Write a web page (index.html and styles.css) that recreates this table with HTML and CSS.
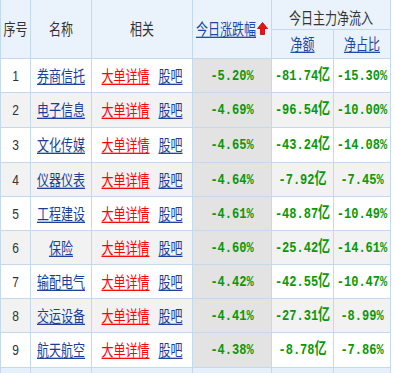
FILE: index.html
```html
<!DOCTYPE html>
<html lang="zh-CN">
<head>
<meta charset="utf-8">
<title>板块资金流</title>
<link rel="stylesheet" href="styles.css">
</head>
<body>
<div class="board">
  <div class="hd span2"><span class="t">序号</span></div>
  <div class="hd span2"><span class="t">名称</span></div>
  <div class="hd span2"><span class="t">相关</span></div>
  <div class="hd span2 sortcol"><a class="t lk" href="#">今日涨跌幅</a><svg class="arrow" width="11" height="13" viewBox="0 0 11 13"><polygon points="5.5,0.5 10.5,6.5 7.5,6.5 7.5,12.5 3.5,12.5 3.5,6.5 0.5,6.5" fill="#ee1111" stroke="#b80000" stroke-width="0.8"/></svg></div>
  <div class="hd cspan2 top"><span class="t">今日主力净流入</span></div>
  <div class="hd"><a class="t lk" href="#">净额</a></div>
  <div class="hd"><a class="t lk" href="#">净占比</a></div>

  <div class="row odd">
    <div class="c"><span class="t idx">1</span></div>
    <div class="c"><a class="t nm" href="#">券商信托</a></div>
    <div class="c rel"><a class="t red" href="#">大单详情</a><a class="t nm" href="#">股吧</a></div>
    <div class="c s"><span class="t num">-5.20%</span></div>
    <div class="c"><span class="t num">-81.74亿</span></div>
    <div class="c"><span class="t num">-15.30%</span></div>
  </div>
  <div class="row even">
    <div class="c"><span class="t idx">2</span></div>
    <div class="c"><a class="t nm" href="#">电子信息</a></div>
    <div class="c rel"><a class="t red" href="#">大单详情</a><a class="t nm" href="#">股吧</a></div>
    <div class="c s"><span class="t num">-4.69%</span></div>
    <div class="c"><span class="t num">-96.54亿</span></div>
    <div class="c"><span class="t num">-10.00%</span></div>
  </div>
  <div class="row odd">
    <div class="c"><span class="t idx">3</span></div>
    <div class="c"><a class="t nm" href="#">文化传媒</a></div>
    <div class="c rel"><a class="t red" href="#">大单详情</a><a class="t nm" href="#">股吧</a></div>
    <div class="c s"><span class="t num">-4.65%</span></div>
    <div class="c"><span class="t num">-43.24亿</span></div>
    <div class="c"><span class="t num">-14.08%</span></div>
  </div>
  <div class="row even">
    <div class="c"><span class="t idx">4</span></div>
    <div class="c"><a class="t nm" href="#">仪器仪表</a></div>
    <div class="c rel"><a class="t red" href="#">大单详情</a><a class="t nm" href="#">股吧</a></div>
    <div class="c s"><span class="t num">-4.64%</span></div>
    <div class="c"><span class="t num">-7.92亿</span></div>
    <div class="c"><span class="t num">-7.45%</span></div>
  </div>
  <div class="row odd">
    <div class="c"><span class="t idx">5</span></div>
    <div class="c"><a class="t nm" href="#">工程建设</a></div>
    <div class="c rel"><a class="t red" href="#">大单详情</a><a class="t nm" href="#">股吧</a></div>
    <div class="c s"><span class="t num">-4.61%</span></div>
    <div class="c"><span class="t num">-48.87亿</span></div>
    <div class="c"><span class="t num">-10.49%</span></div>
  </div>
  <div class="row even">
    <div class="c"><span class="t idx">6</span></div>
    <div class="c"><a class="t nm" href="#">保险</a></div>
    <div class="c rel"><a class="t red" href="#">大单详情</a><a class="t nm" href="#">股吧</a></div>
    <div class="c s"><span class="t num">-4.60%</span></div>
    <div class="c"><span class="t num">-25.42亿</span></div>
    <div class="c"><span class="t num">-14.61%</span></div>
  </div>
  <div class="row odd">
    <div class="c"><span class="t idx">7</span></div>
    <div class="c"><a class="t nm" href="#">输配电气</a></div>
    <div class="c rel"><a class="t red" href="#">大单详情</a><a class="t nm" href="#">股吧</a></div>
    <div class="c s"><span class="t num">-4.42%</span></div>
    <div class="c"><span class="t num">-42.55亿</span></div>
    <div class="c"><span class="t num">-10.47%</span></div>
  </div>
  <div class="row even">
    <div class="c"><span class="t idx">8</span></div>
    <div class="c"><a class="t nm" href="#">交运设备</a></div>
    <div class="c rel"><a class="t red" href="#">大单详情</a><a class="t nm" href="#">股吧</a></div>
    <div class="c s"><span class="t num">-4.41%</span></div>
    <div class="c"><span class="t num">-27.31亿</span></div>
    <div class="c"><span class="t num">-8.99%</span></div>
  </div>
  <div class="row odd">
    <div class="c"><span class="t idx">9</span></div>
    <div class="c"><a class="t nm" href="#">航天航空</a></div>
    <div class="c rel"><a class="t red" href="#">大单详情</a><a class="t nm" href="#">股吧</a></div>
    <div class="c s"><span class="t num">-4.38%</span></div>
    <div class="c"><span class="t num">-8.78亿</span></div>
    <div class="c"><span class="t num">-7.86%</span></div>
  </div>
  <div class="row next">
    <div class="c"></div>
    <div class="c"></div>
    <div class="c"></div>
    <div class="c"></div>
    <div class="c"></div>
    <div class="c"></div>
  </div>
</div>
</body>
</html>
```
FILE: styles.css
```css
html, body {
  margin: 0;
  padding: 0;
  background: #ffffff;
}

body {
  font-family: "Noto Sans CJK SC", "Liberation Sans", sans-serif;
  font-size: 12px;
  color: #333333;
}

.board {
  display: grid;
  width: 391px;
  box-sizing: border-box;
  padding: 0 1px;
  grid-template-columns: 29px 60px 100px 78px 61px 56px;
  grid-template-rows: 29px 28px 33px 34px 34px 33px 33px 33px 33px 33px 34px 5px;
  gap: 1px;
  background: #c4d9ee;
}

.row {
  display: contents;
}

.hd, .c {
  display: flex;
  align-items: center;
  justify-content: center;
  overflow: hidden;
  white-space: nowrap;
}

.hd {
  background: #eaf2fb;
  color: #333333;
}

.span2 {
  grid-row: span 2;
}

.cspan2 {
  grid-column: span 2;
}

.top {
  padding-top: 6px;
  box-sizing: border-box;
}

.t {
  display: inline-block;
  transform: scaleY(1.28);
  line-height: 14px;
}

.lk {
  color: #1848a8;
  text-decoration: underline;
}

.sortcol {
  gap: 1px;
}

.arrow {
  display: block;
  margin-top: -1px;
}

.row.odd .c {
  background: #ffffff;
}

.row.even .c {
  background: #f2f2f2;
}

.row .c.s {
  background: #e3e3e3;
}

.row.next .c {
  background: #e6f0fa;
}

.idx {
  font-family: "Liberation Sans", Arial, sans-serif;
  color: #333333;
}

.nm {
  color: #1a3d9a;
  text-decoration: underline;
}

.red {
  color: #ff0000;
  text-decoration: underline;
}

.rel {
  gap: 9px;
}

.num {
  font-family: "Liberation Mono", "Noto Sans CJK SC", monospace;
  font-weight: bold;
  color: #0a980a;
}
```
